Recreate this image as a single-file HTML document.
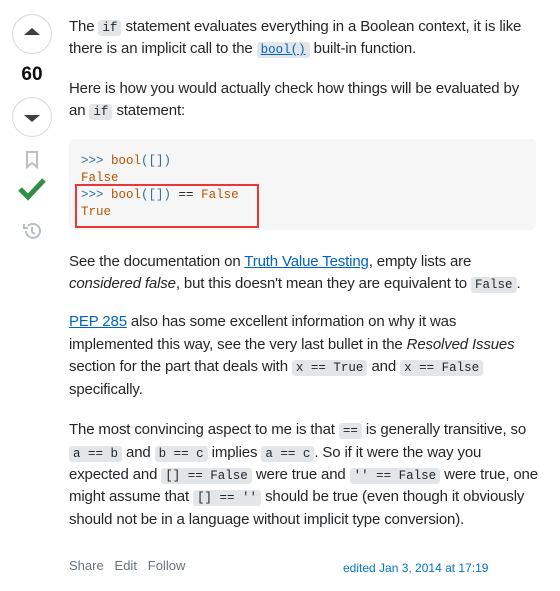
<!DOCTYPE html>
<html><head><style>
body{margin:0;width:560px;height:591px;background:#fff;font-family:"Liberation Sans",sans-serif;color:#232629;position:relative;overflow:hidden}
.l{position:absolute;left:69px;font-size:15px;letter-spacing:-0.15px;white-space:nowrap;line-height:22px}
code{font-family:"Liberation Mono",monospace;font-size:12.5px;letter-spacing:0;background:#e3e6e8;border-radius:3px;padding:1px 4px}
a{color:#0063bf;text-decoration:underline}
.vb{position:absolute;left:12px;width:38px;height:38px;border:1px solid #d6d9dc;border-radius:50%}
pre{position:absolute;left:69px;top:139px;width:467px;height:91px;margin:0;background:#f6f6f6;border-radius:5px;font-family:"Liberation Mono",monospace;font-size:12.5px;line-height:17px;padding:14px 12px;box-sizing:border-box}
.p{color:#2f6f9f}.o{color:#b75301}
</style></head><body>
<div class="vb" style="top:14px"><div style="position:absolute;left:11px;top:13px;border-left:8px solid transparent;border-right:8px solid transparent;border-bottom:7px solid #3b4045"></div></div>
<div style="position:absolute;left:12px;width:40px;top:64px;text-align:center;font-size:19px;font-weight:bold;color:#0c0d0e">60</div>
<div class="vb" style="top:97px"><div style="position:absolute;left:11px;top:17px;border-left:8px solid transparent;border-right:8px solid transparent;border-top:7px solid #3b4045"></div></div>
<svg style="position:absolute;left:25px;top:151px" width="14" height="18"><path d="M2 1h10v15l-5-4-5 4z" fill="none" stroke="#babfc4" stroke-width="2"/></svg>
<svg style="position:absolute;left:18px;top:176px" width="28" height="26"><path d="M2 13l8 8L26 4" fill="none" stroke="#2f8f46" stroke-width="5"/></svg>
<svg style="position:absolute;left:22px;top:221px" width="20" height="20"><path d="M4 10a7 7 0 1 0 2-5M2 3v4h4M10 6v5l3 2" fill="none" stroke="#babfc4" stroke-width="2"/></svg>

<div class="l" style="top:16px">The <code>if</code> statement evaluates everything in a Boolean context, it is like</div>
<div class="l" style="top:38px">there is an implicit call to the <a><code style="color:#0063bf">bool()</code></a> built-in function.</div>
<div class="l" style="top:78px">Here is how you would actually check how things will be evaluated by</div>
<div class="l" style="top:100px">an <code>if</code> statement:</div>
<pre><span class="p">&gt;&gt;&gt; </span><span class="o">bool</span><span class="p">([])</span>
<span class="o">False</span>
<span class="p">&gt;&gt;&gt; </span><span class="o">bool</span><span class="p">([])</span> == <span class="o">False</span>
<span class="o">True</span></pre>
<div style="position:absolute;left:75px;top:184px;width:180px;height:40px;border:2px solid #e8363a"></div>
<div class="l" style="top:251px">See the documentation on <a>Truth Value Testing</a>, empty lists are</div>
<div class="l" style="top:273px"><i>considered false</i>, but this doesn't mean they are equivalent to <code>False</code>.</div>
<div class="l" style="top:311px"><a>PEP 285</a> also has some excellent information on why it was</div>
<div class="l" style="top:334px">implemented this way, see the very last bullet in the <i>Resolved Issues</i></div>
<div class="l" style="top:356px">section for the part that deals with <code>x == True</code> and <code>x == False</code></div>
<div class="l" style="top:379px">specifically.</div>
<div class="l" style="top:419px">The most convincing aspect to me is that <code>==</code> is generally transitive, so</div>
<div class="l" style="top:442px"><code>a == b</code> and <code>b == c</code> implies <code>a == c</code>. So if it were the way you</div>
<div class="l" style="top:464px">expected and <code>[] == False</code> were true and <code>'' == False</code> were true, one</div>
<div class="l" style="top:486px">might assume that <code>[] == ''</code> should be true (even though it obviously</div>
<div class="l" style="top:509px">should not be in a language without implicit type conversion).</div>
<div style="position:absolute;left:69px;top:558px;font-size:13px;color:#6a737c">Share&nbsp;&nbsp; Edit&nbsp;&nbsp; Follow</div>
<div style="position:absolute;left:343px;top:561px;font-size:12px;color:#0074cc">edited Jan 3, 2014 at 17:19</div>
</body></html>
